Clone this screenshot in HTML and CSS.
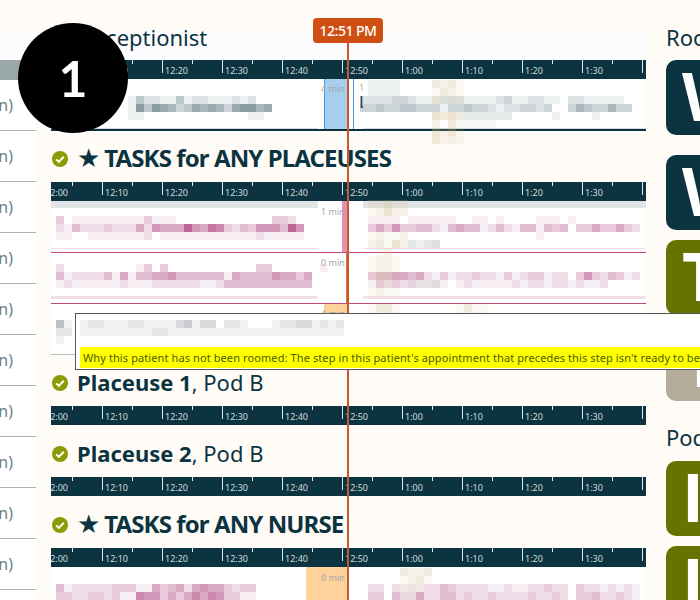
FILE: index.html
```html
<!DOCTYPE html>
<html lang="en">
<head>
<meta charset="utf-8">
<title>Clinic flow board</title>
<link rel="stylesheet" href="styles.css">
<script src="page.js" defer></script>
</head>
<body>
<div class="page">

  <div class="staff">
    <div class="staff-head"></div>
    <div class="staff-row">(0 min)</div>
    <div class="staff-row">(0 min)</div>
    <div class="staff-row">(0 min)</div>
    <div class="staff-row">(0 min)</div>
    <div class="staff-row">(0 min)</div>
    <div class="staff-row">(0 min)</div>
    <div class="staff-row">(0 min)</div>
    <div class="staff-row">(0 min)</div>
    <div class="staff-row">(0 min)</div>
    <div class="staff-row">(0 min)</div>
  </div>

  <div class="board">
    <h2 class="board-title">Receptionist</h2>
    <div class="timeline"></div>
    <div class="row row-dark">
      <div class="lane"><div class="lane-part"></div><div class="lane-part"></div></div>
      <div class="bar bar-blue" style="left:273px;width:24px"></div>
      <div class="bar bar-blue" style="left:302px;width:1px"></div>
      <span class="mins">4 min</span>
      <span class="appt"><small>1</small>L</span>
    </div>

    <h3 class="pool pool-any"><svg class="ok" viewBox="0 0 16 16"><use href="#ok"/></svg><span class="star">★</span><b>TASKS for ANY PLACEUSES</b></h3>
    <div class="timeline"></div>
    <div class="row row-pink">
      <div class="lane lane-strip"><div class="lane-part"></div><div class="lane-part"></div></div>
      <div class="bar bar-pink" style="left:291px;width:6px"></div>
      <span class="mins mins-low">1 min</span>
    </div>
    <div class="row row-pink">
      <div class="lane lane-thick"><div class="lane-part"></div><div class="lane-part"></div></div>
      <div class="bar bar-now" style="left:295px;width:2px"></div>
      <span class="mins">0 min</span>
    </div>
    <div class="row row-gray">
      <div class="bar bar-orange" style="left:273px;width:24px"></div>
      <span class="mins">4 min</span>
    </div>

    <h3 class="pool"><svg class="ok" viewBox="0 0 16 16"><use href="#ok"/></svg><b>Placeuse 1</b>, Pod B</h3>
    <div class="timeline timeline-empty"></div>

    <h3 class="pool"><svg class="ok" viewBox="0 0 16 16"><use href="#ok"/></svg><b>Placeuse 2</b>, Pod B</h3>
    <div class="timeline timeline-empty"></div>

    <h3 class="pool pool-any"><svg class="ok" viewBox="0 0 16 16"><use href="#ok"/></svg><span class="star">★</span><b>TASKS for ANY NURSE</b></h3>
    <div class="timeline"></div>
    <div class="row">
      <div class="bar bar-orange" style="left:255px;width:42px"></div>
      <span class="mins mins-low">0 min</span>
    </div>
  </div>

  <div class="rooms">
    <h2 class="board-title">Rooms</h2>
    <div class="tile tile-dark">W</div>
    <div class="tile tile-dark tile-gap">W</div>
    <div class="tile tile-olive tile-t">T</div>
    <div class="tile tile-beige">I</div>
    <h2 class="board-title rooms-pod">Pods</h2>
    <div class="tile tile-olive">I</div>
    <div class="tile tile-olive">I</div>
  </div>

  <div class="now-line"></div>
  <div class="now-time">12:51 PM</div>

  <div class="tooltip">
    <div class="tooltip-why">Why this patient has not been roomed: The step in this patient's appointment that precedes this step isn't ready to be roomed.</div>
  </div>

  <div class="step-badge">1</div>
  <div id="blurs"></div>
</div>

<svg class="defs" width="0" height="0">
  <symbol id="ok" viewBox="0 0 16 16">
    <circle cx="8" cy="8" r="8" fill="#8b9a06"/>
    <path d="M4.2 8.4l2.6 2.5 5-5.2" fill="none" stroke="#fff" stroke-width="2"/>
  </symbol>
</svg>
</body>
</html>
```

FILE: styles.css
```css
body{
	margin: 0;
	background: #fffcf8;
	font-family: "Noto Sans", "Liberation Sans", sans-serif;
	color: #0c3440;
}

.page{
	position: relative;
	width: 700px;
	height: 600px;
	overflow: hidden;
	display: grid;
	grid-template-columns: 36px 595px 100px;
	column-gap: 15px;
	padding-top: 30px;
	box-sizing: border-box;
}

/* staff list on the left */
.staff{
	background: #fff;
}
.staff-head{
	height: 50px;
	background: linear-gradient(#fcfcff 30px, #9ba8a8 30px);
}
.staff-row{
	height: 51px;
	box-sizing: border-box;
	border-bottom: 1px solid #a8b5b5;
	padding: 14px 23px 0 0;
	display: flex;
	justify-content: flex-end;
	white-space: nowrap;
	font-size: 16px;
	line-height: 22px;
	color: #6e7f86;
}

/* board */
.board-title{
	margin: 0;
	height: 30px;
	padding-left: 29px;
	background: #fcfcfe;
	font-size: 22px;
	font-weight: 400;
	line-height: 14px;
}

.timeline{
	height: 19px;
	background: #0c3440;
	overflow: hidden;
	display: flex;
	color: #cfdcdf;
	font-size: 9px;
	line-height: 19px;
}
.timeline-empty{
	margin-bottom: 1px;
}
.slot{
	position: relative;
	flex: none;
	width: 60px;
	padding: 1px 0 0 3px;
	box-sizing: border-box;
}
.slot:first-child{
	margin-left: -9px;
}
.slot::before, .slot::after{
	content: "";
	position: absolute;
	top: 0;
	width: 1px;
	background: #dfe8ea;
}
.slot::before{
	left: 0;
	height: 13px;
}
.slot::after{
	left: 30px;
	height: 4px;
}

.row{
	position: relative;
	height: 51px;
	box-sizing: border-box;
	background: #fff;
	overflow: hidden;
}
.timeline + .row{
	height: 52px;
}
.row-dark{
	border-bottom: 2px solid #0c3440;
}
.row-pink{
	border-bottom: 1px solid #c4467e;
}
.row-gray{
	border-bottom: 1px solid #b8bcbe;
}

.lane{
	height: 100%;
	display: flex;
	column-gap: 45px;
}
.lane-part{
	flex: 1;
	box-sizing: border-box;
	border-bottom: 1px solid #d5dcdc;
}
.lane-part:first-child{
	flex: none;
	width: 267px;
}
.lane-strip .lane-part{
	border-top: 7px solid #e0e4e6;
	border-bottom-color: #f6dde8;
	margin-bottom: 3px;
}
.lane-thick .lane-part{
	border-bottom: 3px solid #f2e0e9;
	margin-bottom: 4px;
}

.bar{
	position: absolute;
	top: 0;
	bottom: 0;
}
.bar-blue{
	background: #a6cfee;
	border-left: 1px solid #4a96d8;
}
.bar-blue + .bar-blue{
	background: #4a96d8;
	border: 0;
}
.bar-pink{
	background: #e38fb2;
}
.bar-now{
	background: #d8743f;
}
.bar-orange{
	background: #fdd29b;
}

.mins{
	position: absolute;
	left: 270px;
	top: 3px;
	font-size: 9px;
	line-height: 14px;
	color: #a2a9ad;
}
.mins-low{
	top: 4px;
}
.appt{
	position: absolute;
	left: 308px;
	top: 3px;
	width: 4px;
	overflow: hidden;
	font-size: 17px;
	line-height: 18px;
}
.appt small{
	display: block;
	font-size: 9px;
	line-height: 11px;
	color: #c9b77a;
}

.pool{
	margin: 0;
	height: 51px;
	padding: 3px 0 0 1px;
	box-sizing: border-box;
	display: flex;
	align-items: center;
	font-size: 22px;
	font-weight: 400;
	line-height: 26px;
	white-space: pre;
}
.pool-any{
	font-size: 24px;
}
.pool-any b{
	letter-spacing: -0.9px;
}
.pool b{
	font-weight: 700;
}
.ok{
	width: 16px;
	height: 16px;
	margin: 2px 9px 0 0;
	flex: none;
}
.star{
	font-family: "DejaVu Sans", sans-serif;
	font-size: 26px;
	margin-right: 4px;
}

/* rooms on the right */
.rooms{
	margin-left: 5px;
}
.rooms .board-title{
	padding-left: 0;
	background: none;
}
.rooms .rooms-pod{
	margin-top: 29px;
	height: 31px;
}
.tile{
	height: 75px;
	margin-bottom: 10px;
	padding-left: 16px;
	box-sizing: border-box;
	border-radius: 10px;
	color: #fff;
	font-family: "Open Sans", "Liberation Sans", sans-serif;
	font-size: 66px;
	font-weight: 700;
	line-height: 71px;
}
.tile-dark{
	background: #0c3440;
	margin-bottom: 20px;
}
.tile-gap{
	margin-bottom: 10px;
}
.tile-olive{
	background: #667300;
}
.tile-t{
	margin-bottom: 11px;
}
.tile-beige{
	background: #b5ac9b;
	padding-left: 25px;
}

/* current time */
.now-line{
	position: absolute;
	left: 347px;
	top: 43px;
	bottom: 0;
	width: 2px;
	background: #c8592c;
	z-index: 2;
}
.now-time{
	position: absolute;
	left: 313px;
	top: 18px;
	width: 70px;
	height: 25px;
	border-radius: 4px;
	background: #cf4f12;
	color: #fff;
	font-size: 14px;
	font-weight: 500;
	letter-spacing: -0.5px;
	line-height: 25px;
	text-align: center;
	z-index: 2;
}

/* tooltip over the board */
.tooltip{
	position: absolute;
	left: 75px;
	top: 313px;
	width: 700px;
	height: 57px;
	box-sizing: border-box;
	border: 1px solid #555;
	background: #fff;
	padding: 33px 0 0 4px;
	z-index: 5;
}
.tooltip-why{
	height: 21px;
	padding-left: 3px;
	background: #ff0;
	color: #4a5c00;
	font-size: 11px;
	letter-spacing: 0.1px;
	line-height: 21px;
	white-space: nowrap;
}

.step-badge{
	position: absolute;
	left: 18px;
	top: 23px;
	width: 110px;
	height: 110px;
	border-radius: 50%;
	background: #000;
	color: #fff;
	font-family: Lato, sans-serif;
	font-size: 50px;
	font-weight: 700;
	line-height: 110px;
	text-align: center;
	z-index: 7;
}

/* pixelated patient names */
.blur{
	position: absolute;
	z-index: 1;
}
.blur-top{
	z-index: 6;
}
.blur-row{
	display: flex;
	height: 8px;
}
.blur-row span{
	flex: none;
	width: 8px;
	height: 8px;
}

.defs{
	position: absolute;
}
```

FILE: page.js
```js
// time scale on every timeline
var labels = ["12:00","12:10","12:20","12:30","12:40","12:50","1:00","1:10","1:20","1:30","1:40"];
document.querySelectorAll(".timeline").forEach(function(t){
	labels.forEach(function(l){
		var s = document.createElement("span");
		s.className = "slot";
		s.textContent = l;
		t.appendChild(s);
	});
});

// names are pixelated on an 8px grid: x, y, colour, rows of opacity digits
var GRAY = "#55727a", PINK = "#b5548a", SAND = "#cdb98a", SLATE = "#7a8088", PALE = "#a8aeae";
var blurs = [
	// receptionist
	[128, 96, GRAY, ["142211412211121200","174765346565367756","110000000000000110"]],
	[368, 80, GRAY, ["1111","1111"]],
	[360, 96, GRAY, ["2222332111222111123112211022111110","3343344333133433212233230035433533","000000000000011111100000100001000"]],
	[432, 80, SAND, ["3231","1321","3121","0000","4342","2030","3231","3121"]],
	[456, 112, PALE, ["11111110000","11111"]],

	// tasks for any placeuse, row 1
	[56, 216, PINK, ["30111111111311100000000000033200000","214222322252655596587324366649600","1100111111120111111111111211111"]],
	[368, 216, PINK, ["111101111110011010000111010","3536334421454412421441434033533532","0000000000000000000001"]],
	[368, 200, SAND, ["22322","12422","00000","00000","12112","23142","01200"]],
	[408, 232, PALE, ["0000","3234"]],

	// row 2
	[56, 264, PINK, ["2000000000130300000000000330000001","41222241514455644444415444465535","12111111211122222211244444444444"]],
	[368, 264, PINK, ["00000000000000000000000","3445545213122322131233122036324312","132322111101211111212212212112"]],
	[368, 256, SAND, ["1221","1221","1321","0110","0000","0000","1331","1232"]],
	[408, 280, PALE, ["2223"]],
	[368, 288, SAND, ["1211"]],

	// row 3, under the tooltip
	[56, 320, SLATE, ["51","22","1"]],
	[456, 304, SAND, ["1311","1221"]],

	// tooltip
	[80, 320, SLATE, ["122111221111341330221000122331212","111111111221111111111111111111111"], "top"],

	// tasks for any nurse
	[56, 584, PINK, ["4122222333115345256553233","3322332311766353575763311"]],
	[368, 584, PINK, ["2202111224322221121122322032212121","3304225224423223222232232033422321"]],
	[400, 568, SAND, ["3223","1231","1210","1100"]]
];

var box = document.getElementById("blurs");
blurs.forEach(function(b){
	var el = document.createElement("div");
	el.className = b[4] == "top" ? "blur blur-top" : "blur";
	el.style.left = b[0] + "px";
	el.style.top = b[1] + "px";
	b[3].forEach(function(r){
		var row = document.createElement("div");
		row.className = "blur-row";
		for(var i = 0; i < r.length; i++){
			var c = document.createElement("span");
			c.style.background = b[2];
			c.style.opacity = (parseInt(r.charAt(i), 10) || 0) / 10;
			row.appendChild(c);
		}
		el.appendChild(row);
	});
	box.appendChild(el);
});
```
